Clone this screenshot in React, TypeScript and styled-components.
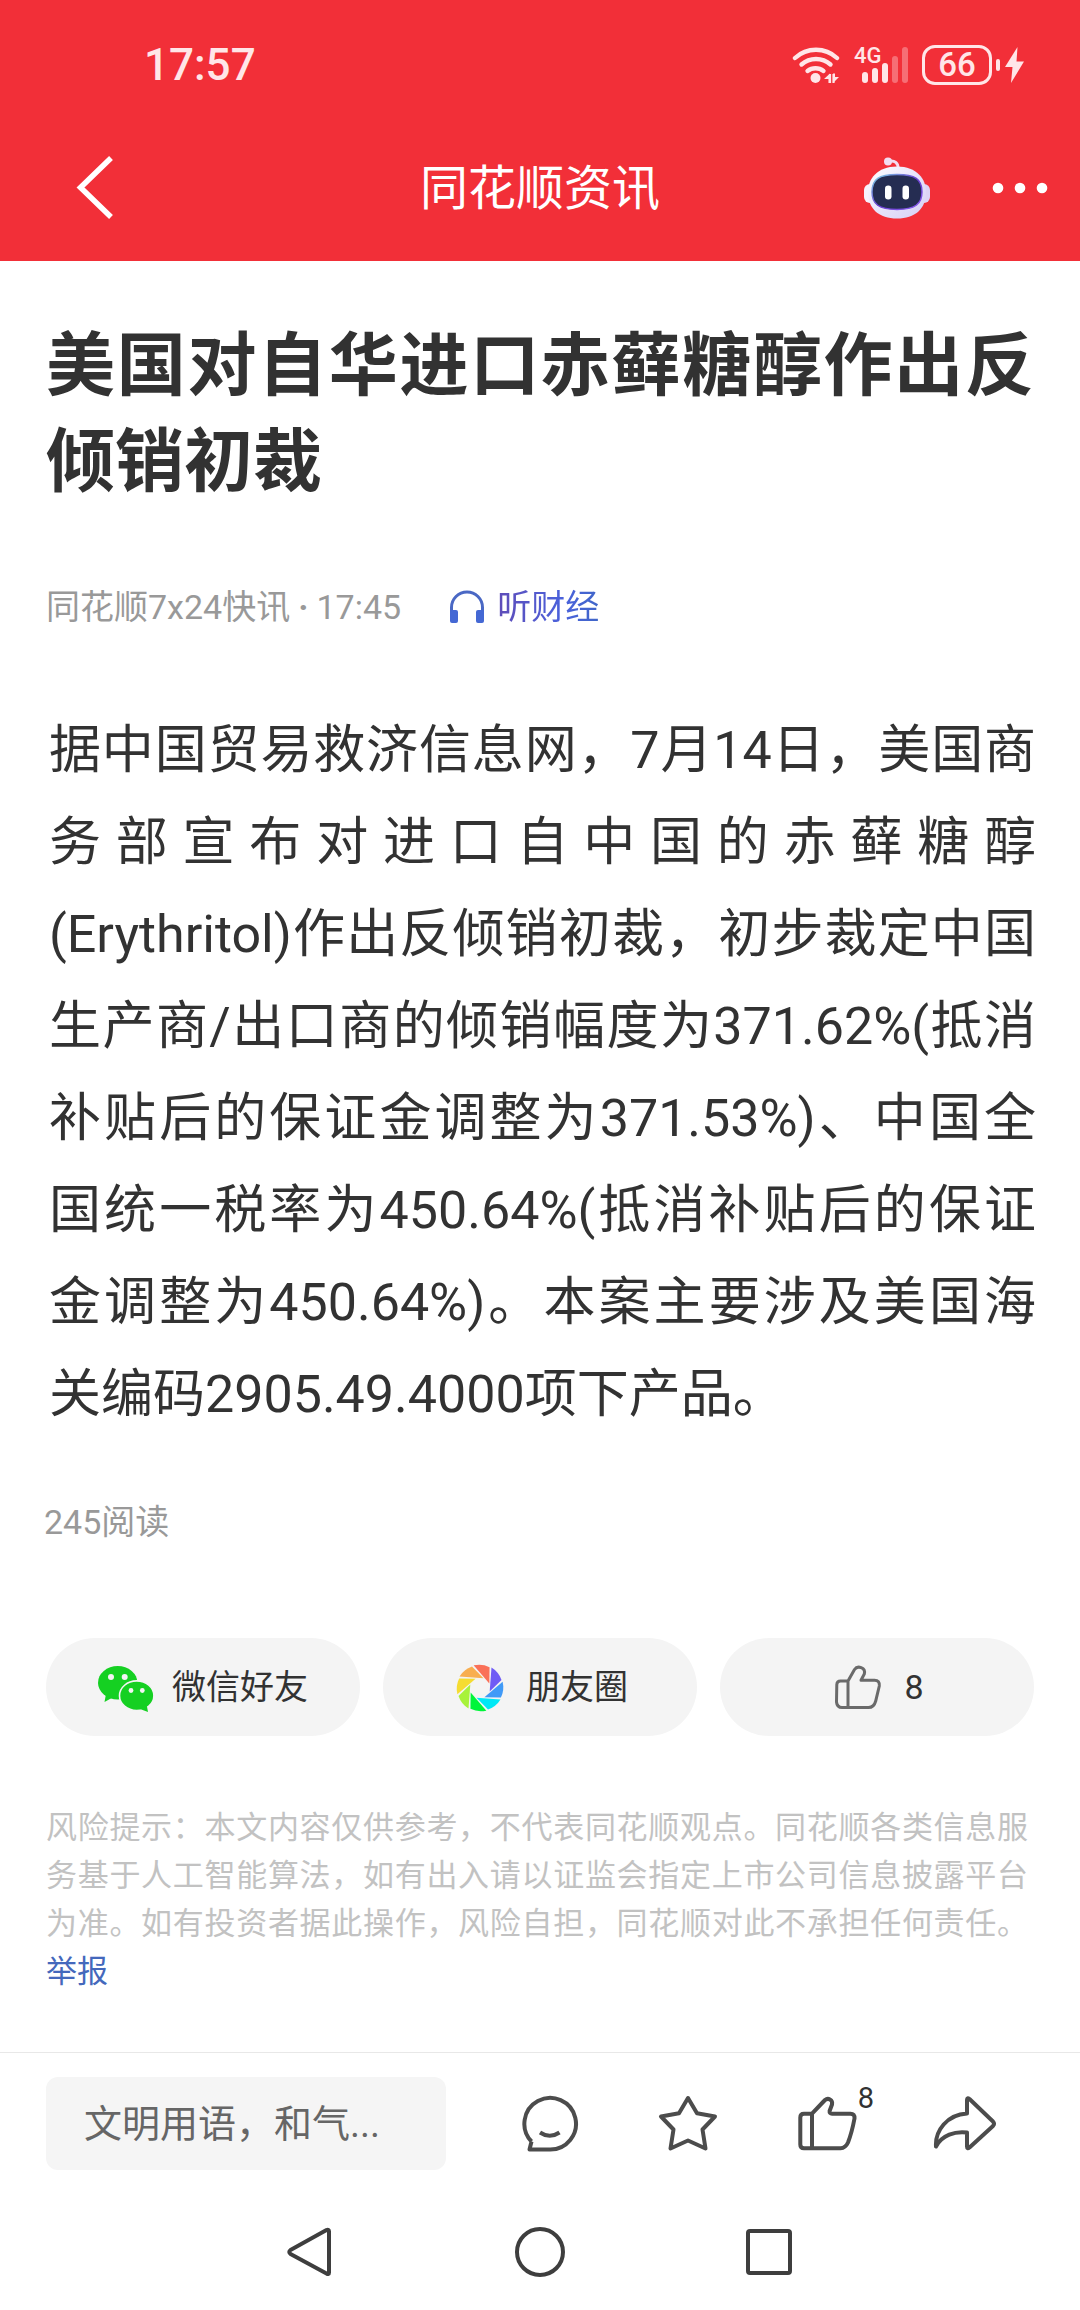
import React from "react";
import styled, { createGlobalStyle } from "styled-components";

const GlobalStyle = createGlobalStyle`
  *, *::before, *::after { box-sizing: border-box; }
  body {
    margin: 0;
    background: #fff;
    color: #323232;
    font-family: Roboto, "Noto Sans CJK SC", sans-serif;
  }
  h1, p { margin: 0; font-weight: 400; }
  button, input { font: inherit; color: inherit; }
  svg { display: block; flex: none; }
`;

const Page = styled.div`
  display: flex;
  flex-direction: column;
  min-height: 100vh;
`;

const Header = styled.header`
  background: #f22f38;
  color: #fff;
`;

const StatusBar = styled.div`
  display: flex;
  align-items: center;
  justify-content: space-between;
  height: 118px;
  padding: 12px 55px 0 144px;
  color: #ffe6e8;
`;

const Clock = styled.time`
  font-size: 44px;
  font-weight: 500;
  line-height: 48px;
`;

const StatusIcons = styled.div`
  display: flex;
  align-items: center;
  gap: 14px;
`;

const Signal = styled.div`
  display: flex;
  position: relative;
`;

const NetworkLabel = styled.span`
  position: absolute;
  left: 0;
  top: -2px;
  font-size: 22px;
  font-weight: 500;
  line-height: 24px;
`;

const BatteryGroup = styled.div`
  display: flex;
  align-items: center;
  gap: 4px;
`;

const Battery = styled.span`
  width: 70px;
  height: 40px;
  border: 3px solid currentColor;
  border-radius: 13px;
  font-size: 33px;
  font-weight: 500;
  line-height: 34px;
  text-align: center;
`;

const BatteryTip = styled.span`
  width: 4px;
  height: 12px;
  border-radius: 2px;
  background: currentColor;
`;

const NavBar = styled.div`
  display: grid;
  grid-template-columns: 1fr auto 1fr;
  align-items: center;
  height: 143px;
  padding: 0 32px 4px 74px;
`;

const NavTitle = styled.span`
  font-size: 48px;
  line-height: 64px;
  margin: 3px 42px 0 0;
`;

const NavActions = styled.div`
  display: flex;
  align-items: center;
  justify-content: flex-end;
  gap: 62px;
`;

const IconButton = styled.button`
  position: relative;
  display: flex;
  justify-self: start;
  padding: 0;
  border: 0;
  background: none;
  cursor: pointer;
`;

const Article = styled.main`
  flex: 1;
  padding: 58px 46px 56px;
`;

const Headline = styled.h1`
  && { font-weight: 700; }
  font-size: 69px;
  line-height: 96px;
  text-align: justify;
`;

const Meta = styled.div`
  display: flex;
  align-items: center;
  gap: 48px;
  margin-top: 72px;
  font-size: 34px;
  line-height: 48px;
  color: #999;
`;

const Dot = styled.span`
  margin: 0 8px;
  font-weight: 700;
`;

const ListenLink = styled.a`
  display: flex;
  align-items: center;
  gap: 12px;
  color: #5060cc;
  text-decoration: none;
`;

const ListenLabel = styled.span`
  background: linear-gradient(90deg, #5f4cb8, #4a62dc 65%, #4066c8);
  background-clip: text;
  -webkit-background-clip: text;
  color: transparent;
`;

const Body = styled.p`
  margin: 74px -2px 0 0;
  padding-left: 3px;
  font-size: 52px;
  line-height: 92px;
  text-align: justify;
`;

const ReadCount = styled.p`
  margin: 57px 0 0 -2px;
  font-size: 34px;
  line-height: 48px;
  color: #999;
`;

const ShareRow = styled.div`
  display: grid;
  grid-template-columns: repeat(3, 1fr);
  gap: 23px;
  margin-top: 92px;
`;

const ShareButton = styled.button`
  display: flex;
  align-items: center;
  justify-content: center;
  gap: 18px;
  height: 98px;
  padding: 0;
  border: 0;
  border-radius: 49px;
  background: #f4f4f4;
  font-size: 34px;
  line-height: 48px;
  cursor: pointer;
`;

const Disclaimer = styled.p`
  margin-top: 68px;
  padding-right: 6px;
  font-size: 31px;
  line-height: 48px;
  text-align: justify;
  color: #c2c2c2;
`;

const ReportLink = styled.a`
  color: #4468bc;
  text-decoration: none;
`;

const CommentBar = styled.footer`
  display: flex;
  align-items: center;
  gap: 35px;
  padding: 24px 46px 23px;
  border-top: 1px solid #e8e8e8;
`;

const CommentInput = styled.input`
  width: 400px;
  height: 93px;
  padding: 0 38px;
  border: 0;
  border-radius: 12px;
  background: #f5f5f5;
  font-size: 38px;
  &::placeholder { color: #666; opacity: 1; }
`;

const Actions = styled.div`
  flex: 1;
  display: grid;
  grid-template-columns: repeat(4, 1fr);
  justify-items: center;
  ${IconButton} { justify-self: center; }
`;

const Badge = styled.span`
  position: absolute;
  left: 61px;
  top: -13px;
  font-size: 29px;
  line-height: 34px;
`;

const SystemNav = styled.nav`
  display: grid;
  grid-template-columns: repeat(3, 1fr);
  align-items: center;
  height: 118px;
  padding: 0 18%;
  ${IconButton} { justify-self: center; }
`;

const WifiIcon = () => (
  <svg width="48" height="38" viewBox="0 0 48 38" fill="none" stroke="currentColor" strokeWidth="4.4" strokeLinecap="round">
    <path d="M3 12A31 31 0 0 1 45 12" />
    <path d="M9.500 18.500A22 22 0 0 1 38.500 18.500" />
    <path d="M15.500 25A13 13 0 0 1 31.500 25" />
    <circle cx="23.500" cy="32" r="5" fill="currentColor" stroke="none" />
    <path d="M32 33L38 27.500V37H36.500V33ZM41 27.500L41 37L47 31H43V27.500Z" fill="currentColor" stroke="none" />
    <path d="M38 28V37M41.500 28V37" strokeWidth="2.200" strokeLinecap="butt" />
  </svg>
);

const SignalIcon = () => (
  <svg width="54" height="38" viewBox="0 0 54 38" fill="currentColor">
    <rect x="8" y="26" width="6" height="11" rx="3" />
    <rect x="18" y="22" width="6" height="15" rx="3" />
    <rect x="28" y="17" width="6" height="20" rx="3" />
    <rect x="38" y="10" width="6" height="27" rx="3" opacity=".35" />
    <rect x="48" y="1" width="6" height="36" rx="3" opacity=".35" />
  </svg>
);

const BoltIcon = () => (
  <svg width="21" height="38" viewBox="0 0 21 38" fill="currentColor">
    <path d="M13.500 1L1 21H8.500L7 37L20 15.500H12.500Z" />
  </svg>
);

const BackIcon = () => (
  <svg width="42" height="66" viewBox="0 0 42 66" fill="none" stroke="#fff" strokeWidth="5.500">
    <path d="M37 3L6.500 32.500L37 62" />
  </svg>
);

const RobotIcon = () => (
  <svg width="66" height="64" viewBox="0 0 66 64">
    <defs>
      <linearGradient id="shell" x1="0" y1="0" x2="1" y2="1">
        <stop offset="0" stopColor="#fff" />
        <stop offset=".5" stopColor="#e8e4fb" />
        <stop offset="1" stopColor="#d6d0f5" />
      </linearGradient>
      <linearGradient id="visorEdge" x1="0" y1="0" x2="1" y2="1">
        <stop offset="0" stopColor="#7fd8e6" />
        <stop offset=".5" stopColor="#6a3fd0" />
        <stop offset="1" stopColor="#8a5cf0" />
      </linearGradient>
    </defs>
    <path d="M24 5.500C31 4 34.500 7 34 13" fill="none" stroke="#f3dcf0" strokeWidth="3" />
    <circle cx="24" cy="5.500" r="4" fill="#f3dcf0" />
    <rect x="0" y="28" width="12" height="19" rx="6" fill="#f7f2fd" />
    <rect x="54" y="28" width="12" height="19" rx="6" fill="#ddd4f6" />
    <path d="M33 10.500C53 10.500 62 23 62 36C62 53 51 62.500 33 62.500C15 62.500 4 53 4 36C4 23 13 10.500 33 10.500Z" fill="url(#shell)" />
    <path d="M33 18.500C51 18.500 58 23 58 36C58 48 51 53.500 33 53.500C15 53.500 8 48 8 36C8 23 15 18.500 33 18.500Z" fill="#252d52" stroke="url(#visorEdge)" strokeWidth="1.500" />
    <rect x="21" y="29.500" width="6.500" height="14" rx="3.200" fill="#fff" />
    <rect x="38.500" y="29.500" width="6.500" height="14" rx="3.200" fill="#fff" />
  </svg>
);

const MoreIcon = () => (
  <svg width="56" height="12" viewBox="0 0 56 12" fill="#fff">
    <circle cx="6" cy="6" r="5.300" />
    <circle cx="28" cy="6" r="5.300" />
    <circle cx="50" cy="6" r="5.300" />
  </svg>
);

const HeadphoneIcon = () => (
  <svg width="36" height="34" viewBox="0 0 36 34">
    <path d="M2.500 24V17.500A15.500 15.500 0 0 1 33.500 17.500V24" fill="none" stroke="#4a68c4" strokeWidth="3" />
    <rect x="1" y="20" width="8" height="13" rx="2" fill="#4468d4" />
    <rect x="27" y="20" width="8" height="13" rx="2" fill="#4468d4" />
  </svg>
);

const WechatIcon = () => (
  <svg width="56" height="56" viewBox="0 0 56 56" fill="#15d022">
    <ellipse cx="19.700" cy="23.700" rx="19.700" ry="16.700" />
    <path d="M8 35L6.500 43L15.500 38Z" />
    <ellipse cx="38.700" cy="36.700" rx="17.200" ry="14.800" stroke="#f4f4f4" strokeWidth="1.600" />
    <path d="M42 50L50 53L48.500 45Z" />
    <g fill="#f4f4f4">
      <circle cx="13" cy="18" r="3" />
      <circle cx="26.700" cy="18" r="3" />
      <circle cx="33" cy="31.500" r="2.400" />
      <circle cx="44.300" cy="31.500" r="2.400" />
    </g>
  </svg>
);

const bladeColors = ["#6f5cf5", "#409af7", "#00e8f5", "#00f53a", "#a8f23a", "#f5dc32", "#f8ae50", "#fa7058"];

const MomentsIcon = () => (
  <svg width="56" height="56" viewBox="-28 -29 56 56">
    {bladeColors.map((color, i) => (
      <path key={color} d="M11.500 -20.500A23.500 23.500 0 0 1 21.500 -8L9.700 3.500Z" fill={color} transform={`rotate(${i * 45})`} />
    ))}
  </svg>
);

const ThumbIcon = () => (
  <svg width="56" height="56" viewBox="0 0 56 56" fill="none" stroke="#6a6a6a" strokeWidth="3" strokeLinejoin="round">
    <path d="M18 22H10.500Q7 22 6.800 25.500L6.500 43Q7 48.500 12 48.500H38.500Q44 48.500 45.700 42L49.300 27Q50 21.300 44.500 21.300H31L34.300 15C36 8.500 27.500 6 24.500 10.500L18 22V48.500" />
  </svg>
);

const actionStroke = {
  width: 60,
  height: 60,
  viewBox: "0 1 60 60",
  fill: "none",
  stroke: "#4c4c4c",
  strokeWidth: 4,
  strokeLinejoin: "round" as const,
};

const CommentIcon = () => (
  <svg {...actionStroke}>
    <path d="M11.500 48.500A25.800 25.800 0 1 1 29.500 56.500H9.500L11.500 48.500" />
    <path d="M20 39.500Q29.700 46 39.500 39.500" />
  </svg>
);

const StarIcon = () => (
  <svg {...actionStroke}>
    <path d="M30 5L39 20.300L57 23.500L44.500 36.500L47.500 55.500L30 47.500L12.500 55.500L15.500 36.500L3 23.500L21 20.300Z" />
  </svg>
);

const BigThumbIcon = () => (
  <svg {...actionStroke}>
    <path d="M15 20.700H7Q3.300 20.700 3.300 24.500V51.500Q3.300 55.300 7 55.300H43.500Q48.500 55 51 49.500C53.500 43 56 33.500 57.500 25.500Q57.800 20.700 53.500 20.700H35Q32.300 20.700 32.600 18L35 11.500C36 6.500 31 4.500 28 7L15 20.700V55.300" />
  </svg>
);

const ShareIcon = () => (
  <svg {...actionStroke} width="64" viewBox="0 1 64 60">
    <path d="M34 20.500V7Q34 4 36.500 6L60 28.500Q62 30.800 60 33L36.500 54.500Q34 56.500 34 53.500V39.500C22 38 9 42 3 53.500C2 38 14 21.500 34 20.500Z" />
  </svg>
);

const navStroke = {
  width: 54,
  height: 54,
  viewBox: "0 0 54 54",
  fill: "none",
  stroke: "#3e3e3e",
  strokeWidth: 4,
  strokeLinejoin: "round" as const,
};

export default function App() {
  return (
    <Page lang="zh-CN">
      <GlobalStyle />
      <Header>
        <StatusBar>
          <Clock>17:57</Clock>
          <StatusIcons>
            <WifiIcon />
            <Signal>
              <NetworkLabel>4G</NetworkLabel>
              <SignalIcon />
            </Signal>
            <BatteryGroup>
              <Battery>66</Battery>
              <BatteryTip />
              <BoltIcon />
            </BatteryGroup>
          </StatusIcons>
        </StatusBar>
        <NavBar>
          <IconButton aria-label="返回"><BackIcon /></IconButton>
          <NavTitle>同花顺资讯</NavTitle>
          <NavActions>
            <IconButton aria-label="智能助手"><RobotIcon /></IconButton>
            <IconButton aria-label="更多"><MoreIcon /></IconButton>
          </NavActions>
        </NavBar>
      </Header>

      <Article>
        <Headline>美国对自华进口赤藓糖醇作出反倾销初裁</Headline>
        <Meta>
          <span>同花顺7x24快讯<Dot>·</Dot>17:45</span>
          <ListenLink href="#listen">
            <HeadphoneIcon />
            <ListenLabel>听财经</ListenLabel>
          </ListenLink>
        </Meta>
        <Body>
          据中国贸易救济信息网，7月14日，美国商务部宣布对进口自中国的赤藓糖醇(Erythritol)作出反倾销初裁，初步裁定中国生产商/出口商的倾销幅度为371.62%(抵消补贴后的保证金调整为371.53%)、中国全国统一税率为450.64%(抵消补贴后的保证金调整为450.64%)。本案主要涉及美国海关编码2905.49.4000项下产品。
        </Body>
        <ReadCount>245阅读</ReadCount>
        <ShareRow>
          <ShareButton><WechatIcon />微信好友</ShareButton>
          <ShareButton><MomentsIcon />朋友圈</ShareButton>
          <ShareButton aria-label="点赞 8"><ThumbIcon />8</ShareButton>
        </ShareRow>
        <Disclaimer>
          风险提示：本文内容仅供参考，不代表同花顺观点。同花顺各类信息服务基于人工智能算法，如有出入请以证监会指定上市公司信息披露平台为准。如有投资者据此操作，风险自担，同花顺对此不承担任何责任。<ReportLink href="#report">举报</ReportLink>
        </Disclaimer>
      </Article>

      <CommentBar>
        <CommentInput type="text" aria-label="评论" placeholder="文明用语，和气..." />
        <Actions>
          <IconButton aria-label="评论"><CommentIcon /></IconButton>
          <IconButton aria-label="收藏"><StarIcon /></IconButton>
          <IconButton aria-label="点赞"><BigThumbIcon /><Badge>8</Badge></IconButton>
          <IconButton aria-label="分享"><ShareIcon /></IconButton>
        </Actions>
      </CommentBar>

      <SystemNav>
        <IconButton aria-label="系统返回">
          <svg {...navStroke}><path d="M46 6.500V47.500Q46 50 43.500 48.500L7.500 29Q5 27 7.500 25L43.500 5Q46 4 46 6.500Z" /></svg>
        </IconButton>
        <IconButton aria-label="主屏幕">
          <svg {...navStroke}><circle cx="27" cy="27" r="23" /></svg>
        </IconButton>
        <IconButton aria-label="最近任务">
          <svg {...navStroke}><rect x="5" y="6" width="42" height="42" rx="2" /></svg>
        </IconButton>
      </SystemNav>
    </Page>
  );
}
